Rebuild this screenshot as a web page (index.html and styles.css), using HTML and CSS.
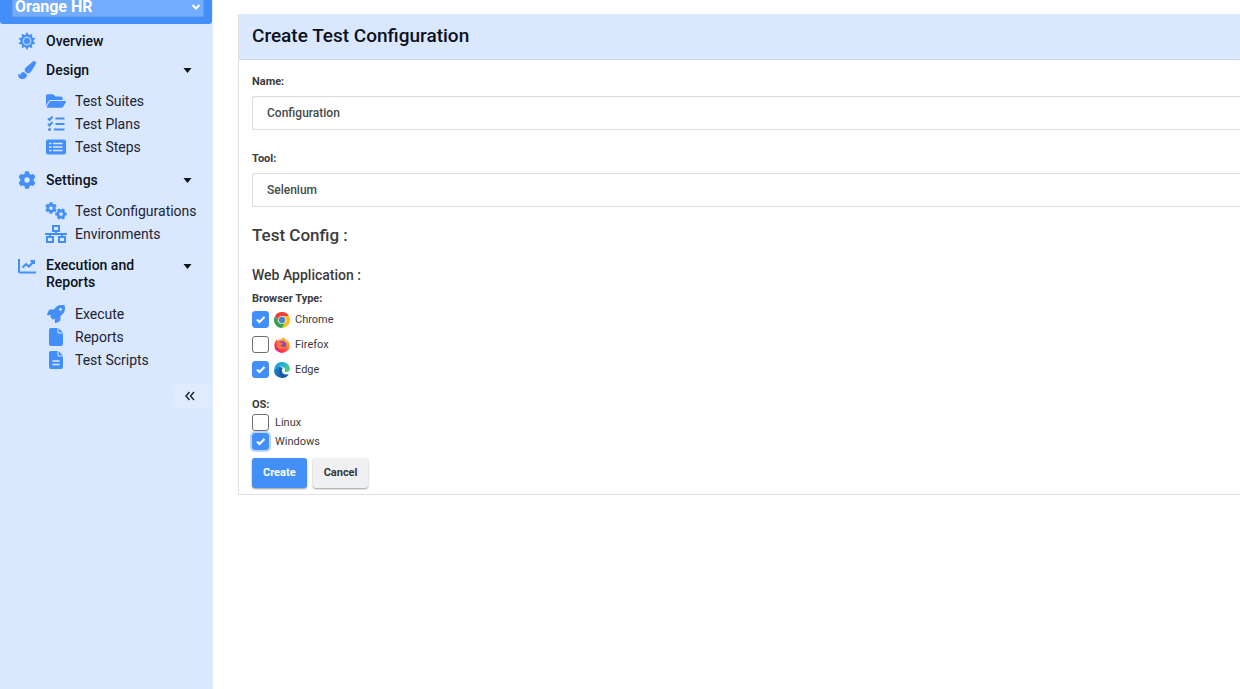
FILE: index.html
```
<!DOCTYPE html>
<html lang="en">
<head>
<meta charset="utf-8">
<meta name="viewport" content="width=device-width, initial-scale=1">
<title>Create Test Configuration</title>
<link rel="stylesheet" href="styles.css">
</head>
<body>
<svg class="defs" aria-hidden="true">
  <symbol id="cog" viewBox="0 0 512 512"><path d="M487.4 315.7l-42.6-24.6c4.3-23.2 4.3-47 0-70.2l42.6-24.6c4.9-2.8 7.1-8.6 5.5-14-11.1-35.6-30-67.8-54.7-94.6-3.8-4.1-10-5.1-14.8-2.3L380.8 110c-17.9-15.4-38.5-27.3-60.8-35.1V25.8c0-5.6-3.9-10.5-9.4-11.7-36.7-8.2-74.3-7.8-109.2 0-5.5 1.2-9.4 6.1-9.4 11.7V75c-22.2 7.9-42.8 19.8-60.8 35.1L88.7 85.5c-4.9-2.8-11-1.9-14.8 2.3-24.7 26.7-43.6 58.9-54.7 94.6-1.7 5.4.6 11.2 5.5 14L67.3 221c-4.3 23.2-4.3 47 0 70.2l-42.6 24.6c-4.9 2.8-7.1 8.6-5.5 14 11.1 35.6 30 67.8 54.7 94.6 3.8 4.1 10 5.1 14.8 2.3l42.6-24.6c17.9 15.4 38.5 27.3 60.8 35.1v49.2c0 5.6 3.9 10.5 9.4 11.7 36.7 8.2 74.3 7.8 109.2 0 5.5-1.2 9.4-6.1 9.4-11.7v-49.2c22.2-7.9 42.8-19.8 60.8-35.1l42.6 24.6c4.9 2.8 11 1.9 14.8-2.3 24.7-26.7 43.6-58.9 54.7-94.6 1.5-5.5-.7-11.3-5.6-14.1zM256 336c-44.1 0-80-35.9-80-80s35.9-80 80-80 80 35.9 80 80-35.9 80-80 80z"/></symbol>
</svg>
<div class="layout">
  <aside class="sidebar">
    <div class="project-bar">
      <select class="project-select" aria-label="Project"><option>Orange HR</option></select>
      <svg class="project-chevron" viewBox="0 0 10 10" aria-hidden="true"><path d="M1.5 3 5 6.5 8.500 3"/></svg>
    </div>
    <nav class="nav">
      <a class="nav-item" href="#">
        <svg class="icon" viewBox="0 0 24 24" aria-hidden="true">
          <path d="M9 5 12 0l3 5v14l-3 5-3-5z"/><path d="M9 5 12 0l3 5v14l-3 5-3-5z" transform="rotate(36 12 12)"/><path d="M9 5 12 0l3 5v14l-3 5-3-5z" transform="rotate(72 12 12)"/><path d="M9 5 12 0l3 5v14l-3 5-3-5z" transform="rotate(108 12 12)"/><path d="M9 5 12 0l3 5v14l-3 5-3-5z" transform="rotate(144 12 12)"/>
          <circle class="ring" cx="12" cy="12" r="5"/>
        </svg>
        <span>Overview</span>
      </a>
      <section class="nav-group">
        <button class="nav-item" type="button">
          <svg class="icon" viewBox="0 0 512 512" aria-hidden="true"><path d="M167.020 309.340c-40.120 2.580-76.530 17.860-97.190 72.300-2.350 6.210-8 9.980-14.590 9.980-11.110 0-45.460-27.670-55.250-34.350C0 439.620 37.930 512 128 512c75.860 0 128-43.770 128-120.190 0-3.110-.65-6.080-.97-9.130l-88.010-73.340zM457.890 0c-15.160 0-29.370 6.710-40.210 16.450C213.270 199.050 192 203.340 192 257.090c0 13.700 3.250 26.760 8.730 38.700l63.820 53.180c7.210 1.800 14.640 3.030 22.390 3.030 62.110 0 98.110-45.470 211.160-256.460 7.380-14.350 13.900-29.850 13.900-45.990C512 20.640 486 0 457.890 0z"/></svg>
          <span>Design</span>
          <svg class="caret" viewBox="0 0 8 5" aria-hidden="true"><path d="M0 0h8L4 5z"/></svg>
        </button>
        <div class="nav-sub">
          <a class="sub-item" href="#"><svg class="icon-sub" viewBox="0 0 576 512" aria-hidden="true"><path d="M572.694 292.093L500.270 416.248A63.997 63.997 0 0 1 444.989 448H45.025c-18.523 0-30.064-20.093-20.731-36.093l72.424-124.155A64 64 0 0 1 152 256h399.964c18.523 0 30.064 20.093 20.730 36.093zM152 224h328v-48c0-26.510-21.490-48-48-48H272l-64-64H48C21.490 64 0 85.490 0 112v278.046l69.077-118.418C86.214 242.250 117.989 224 152 224z"/></svg>Test Suites</a>
          <a class="sub-item" href="#"><svg class="icon-sub" viewBox="0 0 20 18" aria-hidden="true"><path class="line" d="m2 3.500 1.500 1.500 3-3.500M2 9l1.500 1.500 3-3.500M9.500 3.500h9M9.500 9h9M8 14.500h10.500"/><circle cx="3.500" cy="14.500" r="1.500"/></svg>Test Plans</a>
          <a class="sub-item" href="#"><svg class="icon-sub" viewBox="0 0 20 18" aria-hidden="true"><rect y="1.500" width="20" height="15" rx="2"/><path class="cut" d="M3 5.500h2.500M3 9h2.500M3 12.500h2.500M7 5.500h9.500M7 9h9.500M7 12.500h9.500"/></svg>Test Steps</a>
        </div>
      </section>
      <section class="nav-group">
        <button class="nav-item" type="button">
          <svg class="icon" aria-hidden="true"><use href="#cog"/></svg>
          <span>Settings</span>
          <svg class="caret" viewBox="0 0 8 5" aria-hidden="true"><path d="M0 0h8L4 5z"/></svg>
        </button>
        <div class="nav-sub">
          <a class="sub-item" href="#"><svg class="icon-sub icon-wide" viewBox="0 0 22 18" aria-hidden="true"><use href="#cog" x="0" y="0" width="12" height="12"/><use href="#cog" x="10" y="6" width="12" height="12" transform="rotate(30 16 12)"/></svg>Test Configurations</a>
          <a class="sub-item" href="#"><svg class="icon-sub icon-wide" viewBox="0 0 22 18" aria-hidden="true"><path class="line" d="M8 1h6v5H8zM2 12h6v5H2zM14 12h6v5h-6zM11 6v3M0 9h22M5 9v3M17 9v3"/></svg>Environments</a>
        </div>
      </section>
      <section class="nav-group">
        <button class="nav-item nav-item-tall" type="button">
          <svg class="icon" viewBox="0 0 18 18" aria-hidden="true"><path class="line" d="M1 2v12q0 1.500 1.500 1.500H18M4.500 10.500 8 7l3 2.500 5-5.500M12.500 4H16v3"/></svg>
          <span>Execution and Reports</span>
          <svg class="caret" viewBox="0 0 8 5" aria-hidden="true"><path d="M0 0h8L4 5z"/></svg>
        </button>
        <div class="nav-sub">
          <a class="sub-item" href="#"><svg class="icon-sub" viewBox="0 0 512 512" aria-hidden="true"><path d="M505.120 19.094c-1.189-5.531-6.658-11-12.207-12.188C460.716 0 435.507 0 410.407 0 307.175 0 245.269 55.203 199.052 128H94.838c-16.348.016-35.557 11.875-42.887 26.484L2.516 253.297A28.400 28.400 0 0 0 0 264a24 24 0 0 0 24 24h103.816l-22.474 22.469c-11.366 11.361-12.996 32.258 0 45.250L156.246 406.625c11.156 11.188 32.156 13.156 45.277 0l22.475-22.469V488a24 24 0 0 0 24 24 28.560 28.560 0 0 0 10.707-2.516l98.728-49.390c14.629-7.297 26.508-26.500 26.508-42.860V312.797c72.598-46.313 128.035-108.406 128.035-211.094.099-25.203.099-50.406-6.856-82.609zM384.040 168a40 40 0 1 1 40-40 40 40 0 0 1-40 40z"/></svg>Execute</a>
          <a class="sub-item" href="#"><svg class="icon-sub" viewBox="0 0 14 18" aria-hidden="true"><path d="M2 0h6.500v4q0 1.500 1.500 1.500h4V16q0 2-2 2H2q-2 0-2-2V2q0-2 2-2zM9.500 0 14 4.500H10.500q-1 0-1-1z"/></svg>Reports</a>
          <a class="sub-item" href="#"><svg class="icon-sub" viewBox="0 0 14 18" aria-hidden="true"><path d="M2 0h6.500v4q0 1.500 1.500 1.500h4V16q0 2-2 2H2q-2 0-2-2V2q0-2 2-2zM9.500 0 14 4.500H10.500q-1 0-1-1z"/><path class="cut" d="M3.500 10h7M3.500 13.500h7"/></svg>Test Scripts</a>
        </div>
      </section>
    </nav>
    <button class="collapse" type="button" aria-label="Collapse sidebar"><svg viewBox="0 0 10 10" aria-hidden="true"><path d="M4.500 1 1 5l3.500 4M9 1 5.500 5 9 9"/></svg></button>
  </aside>
  <main class="main">
    <form class="card">
      <h1 class="card-title">Create Test Configuration</h1>
      <div class="card-body">
        <div class="field">
          <label class="label" for="name">Name:</label>
          <input class="control" id="name" type="text" value="Configuration">
        </div>
        <div class="field">
          <label class="label" for="tool">Tool:</label>
          <select class="control" id="tool"><option>Selenium</option></select>
        </div>
        <h2 class="section-title">Test Config :</h2>
        <h3 class="section-subtitle">Web Application :</h3>
        <fieldset class="group browsers">
          <legend class="label">Browser Type:</legend>
          <label class="check"><input type="checkbox" checked>
            <svg class="logo" viewBox="0 0 48 48" aria-hidden="true"><path fill="#e94235" d="M24 12h20.800A24 24 0 0 0 3.200 12l10.400 18z"/><path fill="#fbc116" d="M34.400 30 24 48a24 24 0 0 0 20.800-36H24z"/><path fill="#34a351" d="M13.600 30 3.200 12A24 24 0 0 0 24 48l10.400-18z"/><circle cx="24" cy="24" r="12" fill="#f3e9dc"/><circle cx="24" cy="24" r="9.500" fill="#4a80d0"/></svg>
            Chrome</label>
          <label class="check"><input type="checkbox">
            <svg class="logo" viewBox="0 0 48 48" aria-hidden="true"><defs><linearGradient id="fx" x1="1" y1="0" x2=".2" y2="1"><stop offset="0" stop-color="#ffdf3c"/><stop offset=".4" stop-color="#ff8a28"/><stop offset=".75" stop-color="#ff3850"/><stop offset="1" stop-color="#e3168c"/></linearGradient></defs><path fill="url(#fx)" d="M30 0c0 6 7 8 10 13l1-3c4 5 6 10 6 16a23 22 0 0 1-46 0C1 18 4 11 9 7c0 3 1 4 2 5 2-3 5-4 8-4 4 0 7-6 11-8z"/><circle cx="25" cy="24" r="11" fill="#8044dc"/><path fill="#ff7a35" d="M9 17c6-4 9-2 12 1 4 0 6 1 6 3s-6 2-7 5c2 4 8 5 13 1 0 7-5 10-10 10-10 0-16-9-14-20z"/></svg>
            Firefox</label>
          <label class="check"><input type="checkbox" checked>
            <svg class="logo" viewBox="0 0 48 48" aria-hidden="true"><defs><linearGradient id="eg" x1="0" y1="0" x2="1" y2=".4"><stop offset="0" stop-color="#1f8fdc"/><stop offset=".6" stop-color="#27b4d8"/><stop offset="1" stop-color="#4fcf7c"/></linearGradient><linearGradient id="eb" x1="0" y1="0" x2=".5" y2="1"><stop offset="0" stop-color="#178bd8"/><stop offset="1" stop-color="#1460ae"/></linearGradient></defs><path fill="url(#eb)" d="M0 24a24 24 0 0 0 44 13c-9 4-19 0-20-10-1-4 1-7 3-9L12 11z"/><path fill="url(#eg)" d="M0 24C1 10 11 0 24 0c14 0 24 10 24 20 0 7-5 10-11 10-4 0-6-1-5-3 3-6-1-12-9-13C11 13 3 18 0 24z"/><path fill="#125ca8" d="M16 20c-4 11 2 24 15 27 6-2 10-6 13-10-10 4-22-1-22-13 0-2 0-4 2-6-4-1-6 0-8 2z"/></svg>
            Edge</label>
        </fieldset>
        <fieldset class="group systems">
          <legend class="label">OS:</legend>
          <label class="check"><input type="checkbox">Linux</label>
          <label class="check"><input class="is-focused" type="checkbox" checked>Windows</label>
        </fieldset>
        <div class="actions">
          <button class="button button-primary" type="button">Create</button>
          <button class="button button-secondary" type="button">Cancel</button>
        </div>
      </div>
    </form>
  </main>
</div>
</body>
</html>
```
FILE: styles.css
```
* { box-sizing: border-box; }

body {
  margin: 0;
  background: #fff;
  color: #3b3b3b;
  font: 12px/16px Roboto, "Liberation Sans", sans-serif;
}

button, input, select { font: inherit; }

.defs { position: absolute; width: 0; height: 0; }

.layout { display: flex; min-height: 100vh; }

/* Sidebar */
.sidebar {
  flex: none;
  display: flex;
  flex-direction: column;
  width: 213px;
  background: #d9e7ff;
  border-right: 1px solid #e4edfb;
}

.project-bar {
  position: relative;
  display: flex;
  align-items: flex-end;
  height: 24px;
  padding: 0 8px 7px 12px;
  background: #438ffa;
  border-radius: 0 0 3px 3px;
}

.project-select {
  appearance: none;
  flex: 1;
  height: 24px;
  padding: 3px 2px 0;
  border: 1px solid #6b9fe9;
  border-radius: 0;
  background: #73abff;
  color: #fff;
  font-size: 16px;
  font-weight: 700;
}

.project-chevron {
  position: absolute;
  right: 11px;
  bottom: 12px;
  width: 10px;
  height: 10px;
  fill: none;
  stroke: #fff;
  stroke-width: 2;
}

.nav { padding: 5px 20px 0 18px; }

.nav-item {
  display: flex;
  align-items: center;
  gap: 10px;
  width: 100%;
  min-height: 24px;
  padding: 0;
  border: 0;
  background: none;
  color: #0c111b;
  font-size: 14px;
  font-weight: 500;
  line-height: 17px;
  text-align: left;
  text-decoration: none;
}

.nav-item span { flex: 1; }
.nav-item-tall { align-items: flex-start; }
.nav-item-tall span { padding-right: 30px; }
.nav-item-tall .caret { margin-top: 7px; }

.nav-group { padding-top: 5px; }
.nav-group + .nav-group { padding-top: 10px; }
.nav-group + .nav-group:last-child { padding-top: 12px; }

.icon { flex: none; width: 18px; height: 18px; fill: #438ffa; }
.icon-sub { flex: none; width: 20px; height: 18px; fill: #438ffa; }
.icon-wide { width: 22px; margin: 0 -1px; }
.caret { flex: none; width: 9px; height: 5px; fill: #0c111b; }
.ring { stroke: #a9ccff; stroke-width: 2; }
.line { fill: none; stroke: #438ffa; stroke-width: 2; }
.cut { fill: none; stroke: #d9e7ff; stroke-width: 1.5; }

.nav-sub { padding: 7px 0 0 28px; }
.nav-item-tall + .nav-sub { padding-top: 11px; }

.sub-item {
  display: flex;
  align-items: center;
  gap: 9px;
  height: 23px;
  color: #1d2433;
  font-size: 14px;
  text-decoration: none;
  white-space: nowrap;
}

.collapse {
  display: flex;
  align-items: center;
  justify-content: center;
  align-self: flex-end;
  width: 36px;
  height: 24px;
  margin: 13px 1px 0 0;
  padding: 0 6px 0 0;
  border: 0;
  border-radius: 3px;
  background: #dfebff;
}

.collapse svg { width: 10px; height: 10px; fill: none; stroke: #1d2433; stroke-width: 1.5; }

/* Form card, which runs on to the window's right edge */
.main { flex: 1; min-width: 0; padding: 14px 0 0 25px; }

.card {
  border: 1px solid #dedfe1;
  border-right: 0;
  border-top: 0;
}

.card-title {
  margin: 0;
  padding: 10px 13px 11px;
  border-bottom: 1px solid #ccdaee;
  background: #d9e7ff;
  color: #0c111b;
  font-size: 19px;
  font-weight: 500;
  line-height: 24px;
}

.card-body { padding: 14px 0 6px 13px; }

.field { margin-bottom: 21px; }

.label { display: block; padding: 0; font-size: 11px; font-weight: 700; line-height: 16px; }

.control {
  appearance: none;
  display: block;
  width: 100%;
  height: 34px;
  margin-top: 6px;
  padding: 0 14px;
  border: 1px solid #d8dadc;
  border-right: 0;
  border-radius: 3px 0 0 3px;
  background: #fff;
  color: #444b4b;
  font-weight: 500;
}

.field + .section-title { margin: -3px 0 0; }
.section-title { font-size: 17px; font-weight: 500; line-height: 20px; }
.section-subtitle { margin: 22px 0 8px; font-size: 14px; font-weight: 500; line-height: 16px; }

.group { margin: 0; padding: 0; border: 0; }
.check { display: flex; align-items: center; gap: 5px; width: fit-content; font-size: 11px; }
.browsers .check { height: 25px; }
.systems { margin-top: 15px; }
.systems .check { height: 19px; gap: 6px; }

.check input {
  appearance: none;
  flex: none;
  width: 17px;
  height: 17px;
  margin: 0;
  border: 1px solid #6f7072;
  border-radius: 3px;
  background: #fff;
}

.check input:checked {
  border-color: #438ffa;
  background: #438ffa url("data:image/svg+xml,%3Csvg xmlns='http://www.w3.org/2000/svg' viewBox='0 0 15 15'%3E%3Cpath d='M4 7.500 6.500 10 11.500 5' fill='none' stroke='white' stroke-width='2'/%3E%3C/svg%3E") center / 15px 15px no-repeat;
}

.check .is-focused { box-shadow: 0 0 0 2px #bcd8ff; }

.logo { flex: none; width: 16px; height: 16px; }

.actions { display: flex; gap: 6px; margin-top: 7px; }

.button {
  height: 30px;
  padding: 0 11px;
  border: 0;
  border-radius: 3px;
  font-size: 11px;
  font-weight: 700;
  box-shadow: 0 1px 2px rgba(0, 0, 0, .4);
}

.button-primary { background: #438ffa; color: #fff; }
.button-secondary { background: #eff0f2; color: #33363a; }
```
